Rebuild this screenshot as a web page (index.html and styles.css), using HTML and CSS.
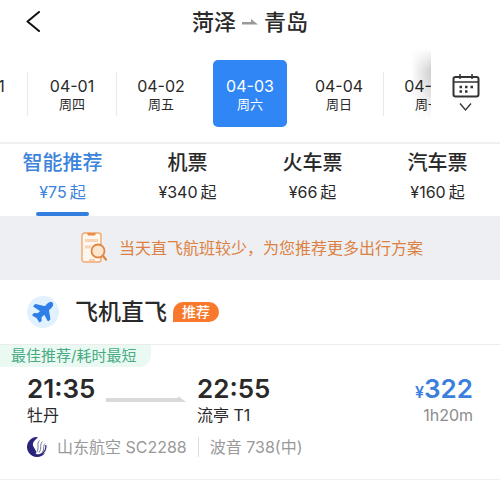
FILE: index.html
```html
<!DOCTYPE html>
<html lang="zh-CN">
<head>
<meta charset="utf-8">
<meta name="viewport" content="width=device-width, initial-scale=1">
<title>菏泽 - 青岛</title>
<link rel="stylesheet" href="styles.css">
</head>
<body>
<header class="header">
  <button class="back" aria-label="返回">
    <svg width="16" height="22" viewBox="0 0 16 22" fill="none" stroke="#111" stroke-width="2" stroke-linecap="round" stroke-linejoin="round"><path d="M14 1 2.500 10.500 14 20"/></svg>
  </button>
  <h1 class="route">菏泽<svg class="route-arrow" width="16" height="6" viewBox="0 0 16 6" fill="#999"><path d="M0 3H9V0L16 5.500H0Z"/></svg>青岛</h1>
</header>

<nav class="dates">
  <div class="date-scroll">
    <div class="date-list">
      <button class="date"><span class="day">03-31</span><span class="week">周三</span></button>
      <button class="date"><span class="day">04-01</span><span class="week">周四</span></button>
      <button class="date"><span class="day">04-02</span><span class="week">周五</span></button>
      <button class="date selected"><span class="day">04-03</span><span class="week">周六</span></button>
      <button class="date"><span class="day">04-04</span><span class="week">周日</span></button>
      <button class="date"><span class="day">04-05</span><span class="week">周一</span></button>
    </div>
  </div>
  <button class="calendar" aria-label="日历">
    <svg width="28" height="38" viewBox="0 0 28 38" fill="none" stroke="#333" stroke-width="2">
      <rect x="1.500" y="3" width="25" height="19.500" rx="2"/>
      <path d="M2 8H26M8 0V5M20 0V5" stroke-width="1.500"/>
      <path d="M7.500 13h2.500M13 13h2.500M18.500 13h2.500M7.500 17.500h2.500M13 17.500h2.500" stroke-width="2.500"/>
      <path d="M8 29.500 13.500 36 19 29.500" stroke-width="1.300"/>
    </svg>
  </button>
</nav>

<nav class="tabs">
  <button class="tab active"><span class="tab-name">智能推荐</span><span class="tab-price">¥75<span class="from">起</span></span></button>
  <button class="tab"><span class="tab-name">机票</span><span class="tab-price">¥340<span class="from">起</span></span></button>
  <button class="tab"><span class="tab-name">火车票</span><span class="tab-price">¥66<span class="from">起</span></span></button>
  <button class="tab"><span class="tab-name">汽车票</span><span class="tab-price">¥160<span class="from">起</span></span></button>
</nav>

<div class="notice">
  <svg width="26" height="32" viewBox="0 0 26 32" fill="none">
    <rect x="1" y="1" width="19" height="29" rx="2.500" fill="#fff7ee" stroke="#f0a870" stroke-width="1.400"/>
    <path d="M6 1h9l-1 2.500H7Z" fill="#eb8d48"/>
    <path d="M4 8.500h13M4 15h6" stroke="#f6d5b7" stroke-width="3"/>
    <path d="M8 28h6" stroke="#f0a870"/>
    <circle cx="17" cy="19" r="6.500" fill="#fbe6d0" stroke="#e28743" stroke-width="1.800"/>
    <path d="M22 24l3 3.500" stroke="#e28743" stroke-width="2.400" stroke-linecap="round"/>
  </svg>
  <span>当天直飞航班较少，为您推荐更多出行方案</span>
</div>

<main>
  <div class="section-head">
    <svg width="32" height="32" viewBox="0 0 32 32">
      <circle cx="16" cy="16" r="16" fill="#e2f1fe"/>
      <path d="M25 7C23.900 6.200 22.200 6.800 21.200 7.800L18 11 8.500 8.800 7 10.200 14 15 11 18 7.300 17.700 6 19 10.200 21.500 12.700 25.700 14 24.500 13.800 21 17.500 17.700 21.200 24.500 22.700 23 21.200 14 24.200 11C25.200 10 25.900 8 25 7Z" fill="#2f7fe8" stroke="#2f7fe8" stroke-width="1.500" stroke-linejoin="round"/>
    </svg>
    <h2 class="section-title">飞机直飞</h2>
    <span class="badge">推荐</span>
  </div>

  <article class="flight">
    <span class="tag">最佳推荐/耗时最短</span>
    <div class="trip">
      <div class="stop from-stop"><strong class="time">21:35</strong><span class="place">牡丹</span></div>
      <svg class="trip-arrow" width="80" height="6" viewBox="0 0 80 6" fill="#d9d9d9"><path d="M0 2H72V0L80 6H0Z"/></svg>
      <div class="stop"><strong class="time">22:55</strong><span class="place">流亭 T1</span></div>
      <div class="stop fare"><strong class="price"><span class="yen">¥</span>322</strong><span class="duration">1h20m</span></div>
    </div>
    <div class="airline">
      <svg width="20" height="20" viewBox="0 0 20 20" fill="none">
        <path d="M9 0A10 10 0 1 0 18.500 15.200C16 17.500 10 18 8.500 16.500 10.500 14.500 7 11.500 6 8.500 5.300 5.500 7.500 3.500 11 .300Z" fill="#29237b"/>
        <path d="M12.500 3.500C9 7 13 10 9.500 15.500M15.500 4.500C12 8 15.500 11 12 15.500M18 6.500C15.500 9.500 18 12 15 15.500" stroke="#77749d" stroke-width="1"/>
        <path d="M18.800 8C19.500 12 17.500 16.500 12.500 17.500" stroke="#29237b" stroke-width="1.200"/>
      </svg>
      <span class="carrier">山东航空 SC2288</span>
      <span class="plane">波音 738(中)</span>
    </div>
  </article>
</main>
</body>
</html>
```
FILE: styles.css
```css
* {
  box-sizing: border-box;
}

body {
  margin: 0;
  background: #fff;
  color: #292929;
  font-family: Inter, "Noto Sans CJK SC", sans-serif;
  font-size: 16px;
  line-height: 20px;
}

button {
  padding: 0;
  border: 0;
  background: none;
  color: inherit;
  font: inherit;
}

svg {
  display: block;
  flex: none;
}

.header {
  display: grid;
  grid-template-columns: 1fr auto 1fr;
  align-items: center;
  height: 44px;
  padding: 0 25px;
}

.back {
  justify-self: start;
  height: 40px;
}

.route {
  display: flex;
  align-items: center;
  gap: 6px;
  margin: 0;
  font-size: 22px;
  font-weight: 500;
  line-height: 32px;
}

.dates {
  display: flex;
  height: 100px;
  border-bottom: 2px solid #f0f0f2;
}

.date-scroll {
  position: relative;
  flex: 1;
  min-width: 0;
  overflow: hidden;
}

.date-scroll::after {
  content: "";
  position: absolute;
  top: 4px;
  right: 0;
  width: 20px;
  height: 72px;
  background: linear-gradient(to right, transparent, rgba(0, 0, 0, 0.18));
  mask-image: linear-gradient(transparent, #000 30%, #000 40%, transparent);
}

.date-list {
  display: flex;
  width: max-content;
  margin-left: -54px;
  padding-top: 16px;
}

.date {
  position: relative;
  display: flex;
  flex-direction: column;
  align-items: center;
  justify-content: center;
  width: 74px;
  height: 67px;
  margin-right: 15px;
  padding-top: 2px;
  border-radius: 5px;
}

.date::after {
  content: "";
  position: absolute;
  top: 12px;
  right: -8px;
  width: 1px;
  height: 44px;
  background: #e9e9e9;
}

.date.selected {
  background: #3186f5;
  color: #fff;
}

.date.selected::after,
.date:has(+ .selected)::after {
  display: none;
}

.day {
  font-size: 16px;
  line-height: 18px;
}

.week {
  font-size: 13px;
  line-height: 18px;
}

.calendar {
  display: grid;
  width: 69px;
  padding-top: 30px;
  justify-content: center;
  align-content: start;
}

.tabs {
  display: grid;
  grid-template-columns: repeat(4, 1fr);
}

.tab {
  display: flex;
  flex-direction: column;
  align-items: center;
  height: 72px;
  padding-top: 5px;
}

.tab-name {
  font-size: 20px;
  font-weight: 500;
  line-height: 28px;
}

.tab-price {
  display: flex;
  gap: 3px;
  font-size: 16px;
  line-height: 30px;
}

.active {
  color: #3b83db;
}

.active::after {
  content: "";
  width: 53px;
  height: 4px;
  margin-top: 5px;
  border-radius: 2px;
  background: #337fdf;
}

.notice {
  display: flex;
  align-items: center;
  justify-content: center;
  gap: 12px;
  height: 64px;
  padding-left: 4px;
  background: #eeeff3;
  color: #dc8141;
}

.section-head {
  display: flex;
  align-items: center;
  height: 65px;
  padding: 0 27px;
  border-bottom: 1px solid #ececec;
}

.section-title {
  margin: 0 6px 0 16px;
  font-size: 23px;
  font-weight: 500;
  line-height: 32px;
}

.badge {
  padding: 0 9px;
  border-radius: 10px 10px 10px 0;
  background: #f8792b;
  color: #fff;
  font-size: 14px;
  font-weight: 500;
}

.flight {
  border-bottom: 2px solid #f0f0f0;
}

.tag {
  display: inline-block;
  padding: 0 15px 0 11px;
  border-bottom-right-radius: 12px;
  background: #eafaf3;
  color: #49aa83;
  font-size: 15px;
  line-height: 22px;
  vertical-align: top;
}

.trip {
  display: flex;
  align-items: flex-start;
  padding: 6px 27px 0;
}

.stop {
  display: flex;
  flex-direction: column;
}

.from-stop {
  width: 79px;
}

.trip-arrow {
  margin: 23px 11px 0 0;
}

.time,
.price {
  font-size: 26px;
  font-weight: 600;
  line-height: 32px;
}

.place,
.duration {
  line-height: 20px;
}

.fare {
  align-items: flex-end;
  margin-left: auto;
}

.price {
  color: #3b7fdc;
}

.yen {
  font-size: 16px;
  line-height: 16px;
}

.duration {
  color: #8c8c8c;
}

.airline {
  display: flex;
  align-items: center;
  padding: 12px 27px 22px;
  color: #999;
}

.carrier {
  margin-left: 10px;
  padding-right: 11px;
  border-right: 1px solid #ddd;
}

.plane {
  padding-left: 11px;
}
```
